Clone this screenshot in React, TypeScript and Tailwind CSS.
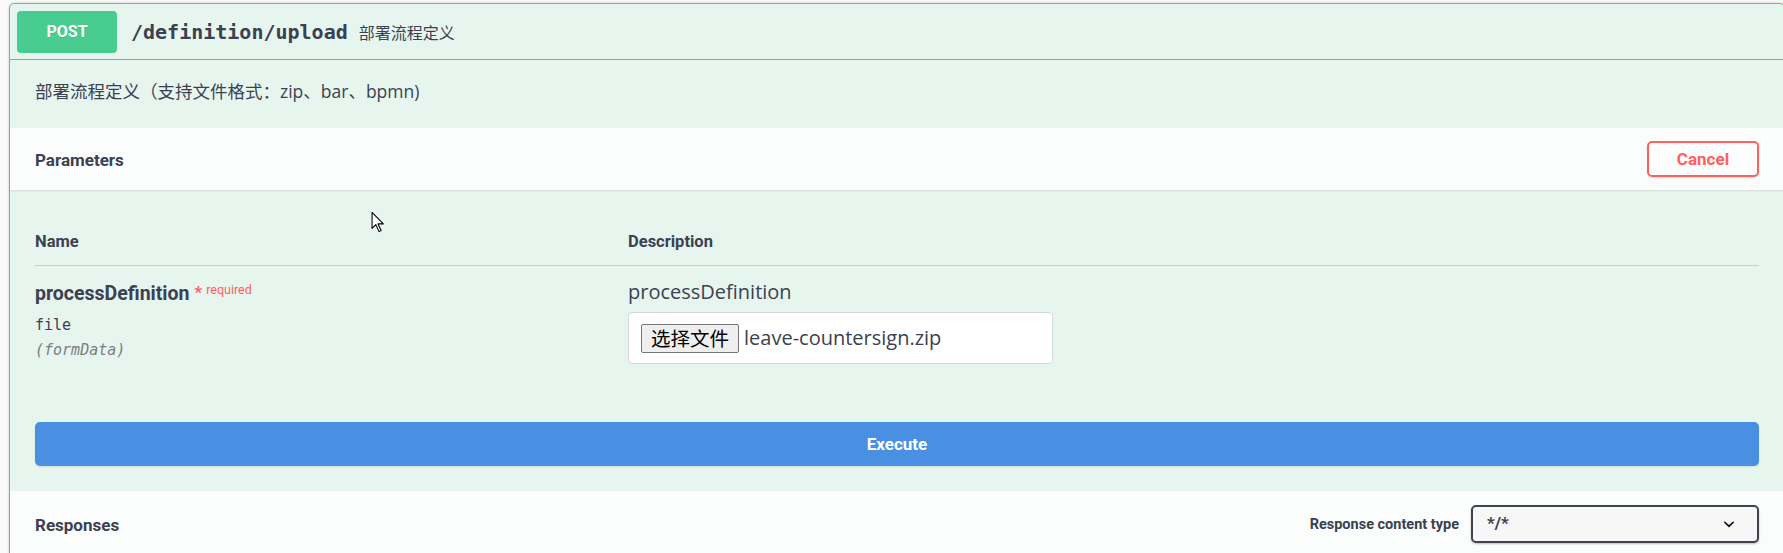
import React from 'react';

const ui = "font-['Roboto',sans-serif]";
const mono = "font-['DejaVu_Sans_Mono','Liberation_Mono',monospace]";
const cjk = "font-['Open_Sans','Noto_Sans_CJK_SC',sans-serif]";

// small arrow pointer left in the capture
const Cursor = () => (
  <svg
    className="absolute left-[371px] top-[211px] pointer-events-none"
    width="15"
    height="23"
    viewBox="0 0 14 21"
  >
    <path
      d="M1 1 L1 16 L4.5 12.5 L7.5 19 L9.5 18 L6.5 11.8 L11.5 11.8 Z"
      fill="#fff"
      stroke="#000"
      strokeWidth="1"
      strokeLinejoin="round"
    />
  </svg>
);

const ParamRow: React.FC = () => (
  <div className="flex">
    <div className="w-[593px] pt-[15px]">
      <div className="flex items-start">
        <span className={`${ui} text-[19.5px] leading-[26px] font-bold text-[#3b4151]`}>
          processDefinition
        </span>
        <span className={`${ui} ml-[5px] text-[17px] leading-[22px] font-bold text-[#ff6060]`}>*</span>
        <span className={`${ui} ml-[4px] mt-[1px] text-[12.5px] leading-[16px] text-[#ff6060]`}>
          required
        </span>
      </div>
      <div className={`${mono} mt-[8px] text-[15px] leading-[20px] text-[#3b4151]`}>file</div>
      <div className={`${mono} mt-[5px] text-[15px] leading-[20px] italic text-[#7a7d85]`}>(formData)</div>
    </div>
    <div className="pt-[13px]">
      <div className={`${cjk} text-[20px] leading-[26px] text-[#3b4151]`}>processDefinition</div>
      <div className="mt-[7px] flex h-[52px] w-[425px] items-center rounded-[4px] border border-[#d9d9d9] bg-white pl-[12px]">
        <div className="flex h-[29px] items-center rounded-[2px] border border-[#767676] bg-[#efefef] px-[9px] font-['Noto_Sans_CJK_SC',sans-serif] text-[19.5px] leading-none text-black">
          选择文件
        </div>
        <span className={`${cjk} ml-[5px] text-[20px] leading-none text-[#3b4151]`}>leave-countersign.zip</span>
      </div>
    </div>
  </div>
);

export default function App() {
  return (
    <div className="relative h-[553px] w-[1783px] overflow-hidden bg-[#fafafa]">
      <div className="ml-[9px] mt-[3px] w-[1776px] rounded-[5px] border border-[#49cc90] bg-[rgba(73,204,144,0.1)] shadow-[0_0_3px_rgba(0,0,0,0.19)]">
        {/* summary */}
        <div className="flex h-[56px] items-center border-b border-[#49cc90] px-[7px]">
          <div
            className={`${ui} flex h-[42px] w-[100px] items-center justify-center rounded-[4px] bg-[#49cc90] text-[16px] font-bold text-white [text-shadow:0_1px_0_rgba(0,0,0,0.1)]`}
          >
            POST
          </div>
          <span className={`${mono} ml-[14px] text-[20px] font-bold text-[#3b4151]`}>/definition/upload</span>
          <span className="ml-[11px] font-['Noto_Sans_CJK_SC',sans-serif] text-[16px] text-[#3b4151]">部署流程定义</span>
        </div>

        {/* description */}
        <div className="h-[68px] px-[25px] pt-[19px]">
          <p className={`${cjk} text-[17.5px] leading-[24px] text-[#3b4151]`}>
            部署流程定义（支持文件格式：zip、bar、bpmn)
          </p>
        </div>

        {/* parameters header */}
        <div className="flex h-[62px] items-center justify-between bg-white/80 px-[25px] shadow-[0_1px_2px_rgba(0,0,0,0.1)]">
          <h4 className={`${ui} pt-[3px] text-[17px] font-bold text-[#3b4151]`}>Parameters</h4>
          <button
            className={`${ui} h-[36px] w-[112px] rounded-[5px] border-2 border-[#ff6060] bg-transparent pt-[1px] text-[17px] font-bold text-[#ff6060] shadow-[0_1px_2px_rgba(0,0,0,0.1)]`}
          >
            Cancel
          </button>
        </div>

        {/* parameters table */}
        <div className="px-[25px] pt-[41px]">
          <div className="flex border-b border-[rgba(59,65,81,0.2)] pb-[13px]">
            <div className={`${ui} w-[593px] text-[16.5px] leading-[21px] font-bold text-[#3b4151]`}>Name</div>
            <div className={`${ui} text-[16.5px] leading-[21px] font-bold text-[#3b4151]`}>Description</div>
          </div>
          <ParamRow />
        </div>

        {/* execute */}
        <div className="px-[25px] pb-[25px] pt-[58px]">
          <button
            className={`${ui} flex h-[44px] w-full items-center justify-center rounded-[5px] bg-[#4990e2] pt-[2px] text-[17px] font-bold text-white shadow-[0_1px_2px_rgba(0,0,0,0.1)]`}
          >
            Execute
          </button>
        </div>

        {/* responses header */}
        <div className="flex h-[66px] items-center justify-between bg-white/80 px-[25px] shadow-[0_1px_2px_rgba(0,0,0,0.1)]">
          <h4 className={`${ui} pt-[3px] text-[17px] font-bold text-[#3b4151]`}>Responses</h4>
          <div className="flex items-center">
            <span className={`${ui} mr-[12px] pt-[2px] text-[14.5px] font-bold text-[#3b4151]`}>Response content type</span>
            <div className="flex h-[38px] w-[288px] items-center justify-between rounded-[5px] border-2 border-[#41444e] bg-[#f7f7f7] pl-[14px] pr-[17px] shadow-[0_1px_2px_rgba(0,0,0,0.25)]">
              <span className={`${ui} text-[17px] font-bold text-[#3b4151]`}>*/*</span>
              <svg width="22" height="22" viewBox="0 0 20 20">
                <path
                  d="M13.418 7.859a.695.695 0 01.978 0 .68.68 0 010 .969l-3.908 3.83a.697.697 0 01-.979 0l-3.908-3.83a.68.68 0 010-.969.695.695 0 01.978 0L10 11l3.418-3.141z"
                  fill="#111"
                />
              </svg>
            </div>
          </div>
        </div>
      </div>
      <Cursor />
    </div>
  );
}
